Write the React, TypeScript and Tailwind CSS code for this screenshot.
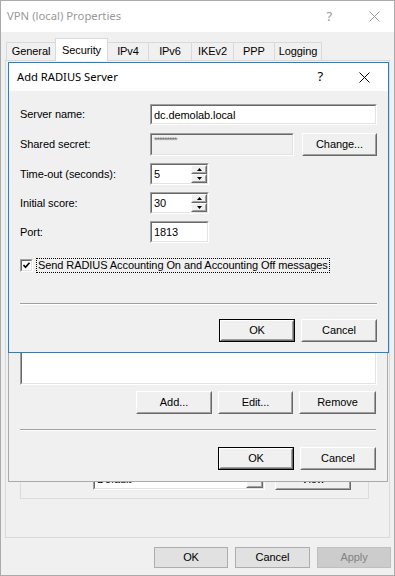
import type { ReactNode } from 'react'

const font = "font-['Liberation_Sans',Arial,sans-serif]"

function XIcon({ color = '#000' }: { color?: string }) {
  return (
    <svg width="11" height="11" viewBox="0 0 11 11">
      <path d="M0.5 0.5L10.5 10.5M10.5 0.5L0.5 10.5" stroke={color} strokeWidth="1" />
    </svg>
  )
}

// classic 3D push button
function ClassicButton({ children, className, isDefault }: { children: ReactNode; className: string; isDefault?: boolean }) {
  const body = (
    <div className="flex h-full w-full border-t border-l border-t-white border-l-white border-b border-r border-b-[#696969] border-r-[#696969]">
      <div className="flex h-full w-full items-center justify-center border-t border-l border-t-[#f0f0f0] border-l-[#f0f0f0] border-b border-r border-b-[#a0a0a0] border-r-[#a0a0a0] bg-[#f0f0f0]">
        {children}
      </div>
    </div>
  )
  if (isDefault) {
    return <div className={`flex border border-[#000] ${className}`}>{body}</div>
  }
  return <div className={`flex ${className}`}>{body}</div>
}

function FlatButton({ children, className, disabled }: { children: ReactNode; className: string; disabled?: boolean }) {
  return (
    <div
      className={`flex items-center justify-center border ${
        disabled ? 'border-[#bfbfbf] bg-[#cccccc] text-[#838383]' : 'border-[#adadad] bg-[#e1e1e1] text-black'
      } ${className}`}
    >
      {children}
    </div>
  )
}

// sunken classic edit box
function Sunken({ children, className, inner = 'bg-white' }: { children?: ReactNode; className: string; inner?: string }) {
  return (
    <div className={`flex border-t border-l border-t-[#a0a0a0] border-l-[#a0a0a0] border-b border-r border-b-white border-r-white ${className}`}>
      <div className={`flex h-full w-full border-t border-l border-t-[#696969] border-l-[#696969] border-b border-r border-b-[#e3e3e3] border-r-[#e3e3e3] ${inner}`}>
        {children}
      </div>
    </div>
  )
}

function SpinBox({ value }: { value: string }) {
  return (
    <Sunken className="h-[22px] w-[59px]">
      <div className="flex-1 pl-[2px] pt-[1px] leading-[16px]">{value}</div>
      <div className="flex w-[16px] flex-col">
        <ClassicButton className="h-[10px] w-[16px]">
          <svg width="5" height="3" viewBox="0 0 5 3"><path d="M2.5 0L5 3H0Z" fill="#000" /></svg>
        </ClassicButton>
        <ClassicButton className="h-[10px] w-[16px]">
          <svg width="5" height="3" viewBox="0 0 5 3"><path d="M0 0H5L2.5 3Z" fill="#000" /></svg>
        </ClassicButton>
      </div>
    </Sunken>
  )
}

function Separator() {
  return (
    <div className="flex flex-col">
      <div className="h-px bg-[#a0a0a0]" />
      <div className="h-px bg-white" />
    </div>
  )
}

const tabs = [
  { label: 'General', w: 'w-[49px]' },
  { label: 'Security', w: 'w-[53px]' },
  { label: 'IPv4', w: 'w-[40px]' },
  { label: 'IPv6', w: 'w-[43px]' },
  { label: 'IKEv2', w: 'w-[42px]' },
  { label: 'PPP', w: 'w-[41px]' },
  { label: 'Logging', w: 'w-[48px]' },
]

export default function App() {
  return (
    <div className={`relative h-[576px] w-[395px] overflow-hidden border border-[#aaaaaa] bg-[#f0f0f0] text-[11px] tracking-[-0.08px] text-black ${font}`}>
      {/* outer window title bar */}
      <div className="flex h-[31px] items-center bg-white pl-[6px] pr-[14px]">
        <span className="flex-1 font-['Noto_Sans',sans-serif] text-[11.3px] tracking-normal text-[#999999]">VPN (local) Properties</span>
        <span className="mr-[37px] font-['Noto_Sans',sans-serif] text-[13px] text-[#999999]">?</span>
        <XIcon color="#999999" />
      </div>

      {/* tabs */}
      <div className="flex h-[28px] items-end pl-[5px] pt-[7px]">
        {tabs.map((t, i) =>
          i === 1 ? (
            <div
              key={t.label}
              className={`relative z-10 -mb-px flex h-[23px] items-start justify-center border border-b-0 border-[#d9d9d9] bg-white pt-[3px] ${t.w}`}
            >
              {t.label}
            </div>
          ) : (
            <div
              key={t.label}
              className={`flex h-[18px] items-center justify-center border-t border-[#d9d9d9] bg-[#f0f0f0] ${
                i === 2 ? '' : 'border-l'
              } ${i === tabs.length - 1 ? 'border-r' : ''} ${t.w}`}
            >
              {t.label}
            </div>
          )
        )}
      </div>

      {/* tab page */}
      <div className="mx-[4px] flex h-[478px] flex-col justify-end border border-[#d9d9d9] bg-[#f0f0f0] pb-[38px]">
        <div className="ml-[14px] mr-[20px] flex h-[60px] items-end border border-[#dcdcdc] pb-[8px] pl-[9px]">
          <span className="w-[63px] pb-[4px]">Certificate:</span>
          <Sunken className="h-[21px] w-[172px]">
            <div className="flex-1 pl-[2px] leading-[17px]">Default</div>
            <ClassicButton className="h-[17px] w-[17px]">
              <svg width="7" height="4" viewBox="0 0 7 4"><path d="M0 0H7L3.5 4Z" fill="#000" /></svg>
            </ClassicButton>
          </Sunken>
          <ClassicButton className="ml-[10px] h-[22px] w-[76px]">
            <span>View</span>
          </ClassicButton>
        </div>
      </div>

      {/* outer buttons */}
      <div className="mt-[9px] flex justify-end gap-[7px] pr-[3px]">
        <FlatButton className="h-[21px] w-[74px]">OK</FlatButton>
        <FlatButton className="h-[21px] w-[75px]">Cancel</FlatButton>
        <FlatButton className="h-[21px] w-[74px]" disabled>Apply</FlatButton>
      </div>

      {/* middle (inactive) dialog */}
      <div className="absolute left-[7px] top-[61px] flex h-[420px] w-[380px] flex-col justify-end border border-[#aaaaaa] bg-[#f0f0f0] px-[11px] pb-[11px]">
        <Sunken className="h-[120px] w-[357px]" />
        <div className="mt-[6px] flex justify-end gap-[6px]">
          <ClassicButton className="h-[23px] w-[76px]">Add...</ClassicButton>
          <ClassicButton className="h-[23px] w-[75px]">Edit...</ClassicButton>
          <ClassicButton className="h-[23px] w-[77px]">Remove</ClassicButton>
        </div>
        <div className="mt-[15px]">
          <Separator />
        </div>
        <div className="mt-[16px] flex justify-end gap-[6px]">
          <ClassicButton className="h-[23px] w-[76px]" isDefault>OK</ClassicButton>
          <ClassicButton className="h-[23px] w-[76px]">Cancel</ClassicButton>
        </div>
      </div>

      {/* active dialog */}
      <div className="absolute left-[7px] top-[61px] flex h-[291px] w-[381px] flex-col border border-[#1883d7] bg-[#f0f0f0]">
        <div className="flex h-[28px] items-center bg-white pl-[8px] pr-[18px]">
          <span className="flex-1 font-['Noto_Sans',sans-serif] text-[11.2px] tracking-normal">Add RADIUS Server</span>
          <span className="mr-[36px] font-['Noto_Sans',sans-serif] text-[13px]">?</span>
          <XIcon />
        </div>
        <div className="flex flex-col px-[11px] pt-[13px]">
          <div className="flex h-[21px] items-center">
            <span className="w-[130px]">Server name:</span>
            <Sunken className="h-[21px] w-[227px]">
              <div className="pl-[2px] pt-[1px] leading-[16px]">dc.demolab.local</div>
            </Sunken>
          </div>
          <div className="mt-[8px] flex h-[23px] items-center">
            <span className="w-[130px]">Shared secret:</span>
            <Sunken className="h-[23px] w-[144px]" inner="bg-[#f0f0f0]">
              <div className="pl-[2px] text-[9px] leading-[10px] tracking-[-1px] text-[#6d6d6d]">*********</div>
            </Sunken>
            <ClassicButton className="ml-[8px] h-[23px] w-[75px]">Change...</ClassicButton>
          </div>
          <div className="mt-[7px] flex h-[22px] items-center">
            <span className="w-[130px]">Time-out (seconds):</span>
            <SpinBox value="5" />
          </div>
          <div className="mt-[7px] flex h-[22px] items-center">
            <span className="w-[130px]">Initial score:</span>
            <SpinBox value="30" />
          </div>
          <div className="mt-[7px] flex h-[22px] items-center">
            <span className="w-[130px]">Port:</span>
            <Sunken className="h-[22px] w-[59px]">
              <div className="pl-[2px] pt-[1px] leading-[16px]">1813</div>
            </Sunken>
          </div>
          <div className="mt-[14px] flex h-[17px] items-center">
            <Sunken className="h-[13px] w-[13px]">
              <svg width="9" height="9" viewBox="0 0 9 9" className="m-auto">
                <path d="M1.5 4L3.5 6.2L7.5 1.8" stroke="#000" strokeWidth="1.6" fill="none" />
              </svg>
            </Sunken>
            <span className="ml-[3px] border border-dotted border-[#000] px-[1px] leading-[13px]">
              Send RADIUS Accounting On and Accounting Off messages
            </span>
          </div>
          <div className="mt-[29px]">
            <Separator />
          </div>
          <div className="mt-[14px] flex justify-end gap-[6px]">
            <ClassicButton className="h-[23px] w-[76px]" isDefault>OK</ClassicButton>
            <ClassicButton className="h-[23px] w-[76px]">Cancel</ClassicButton>
          </div>
        </div>
      </div>
    </div>
  )
}
